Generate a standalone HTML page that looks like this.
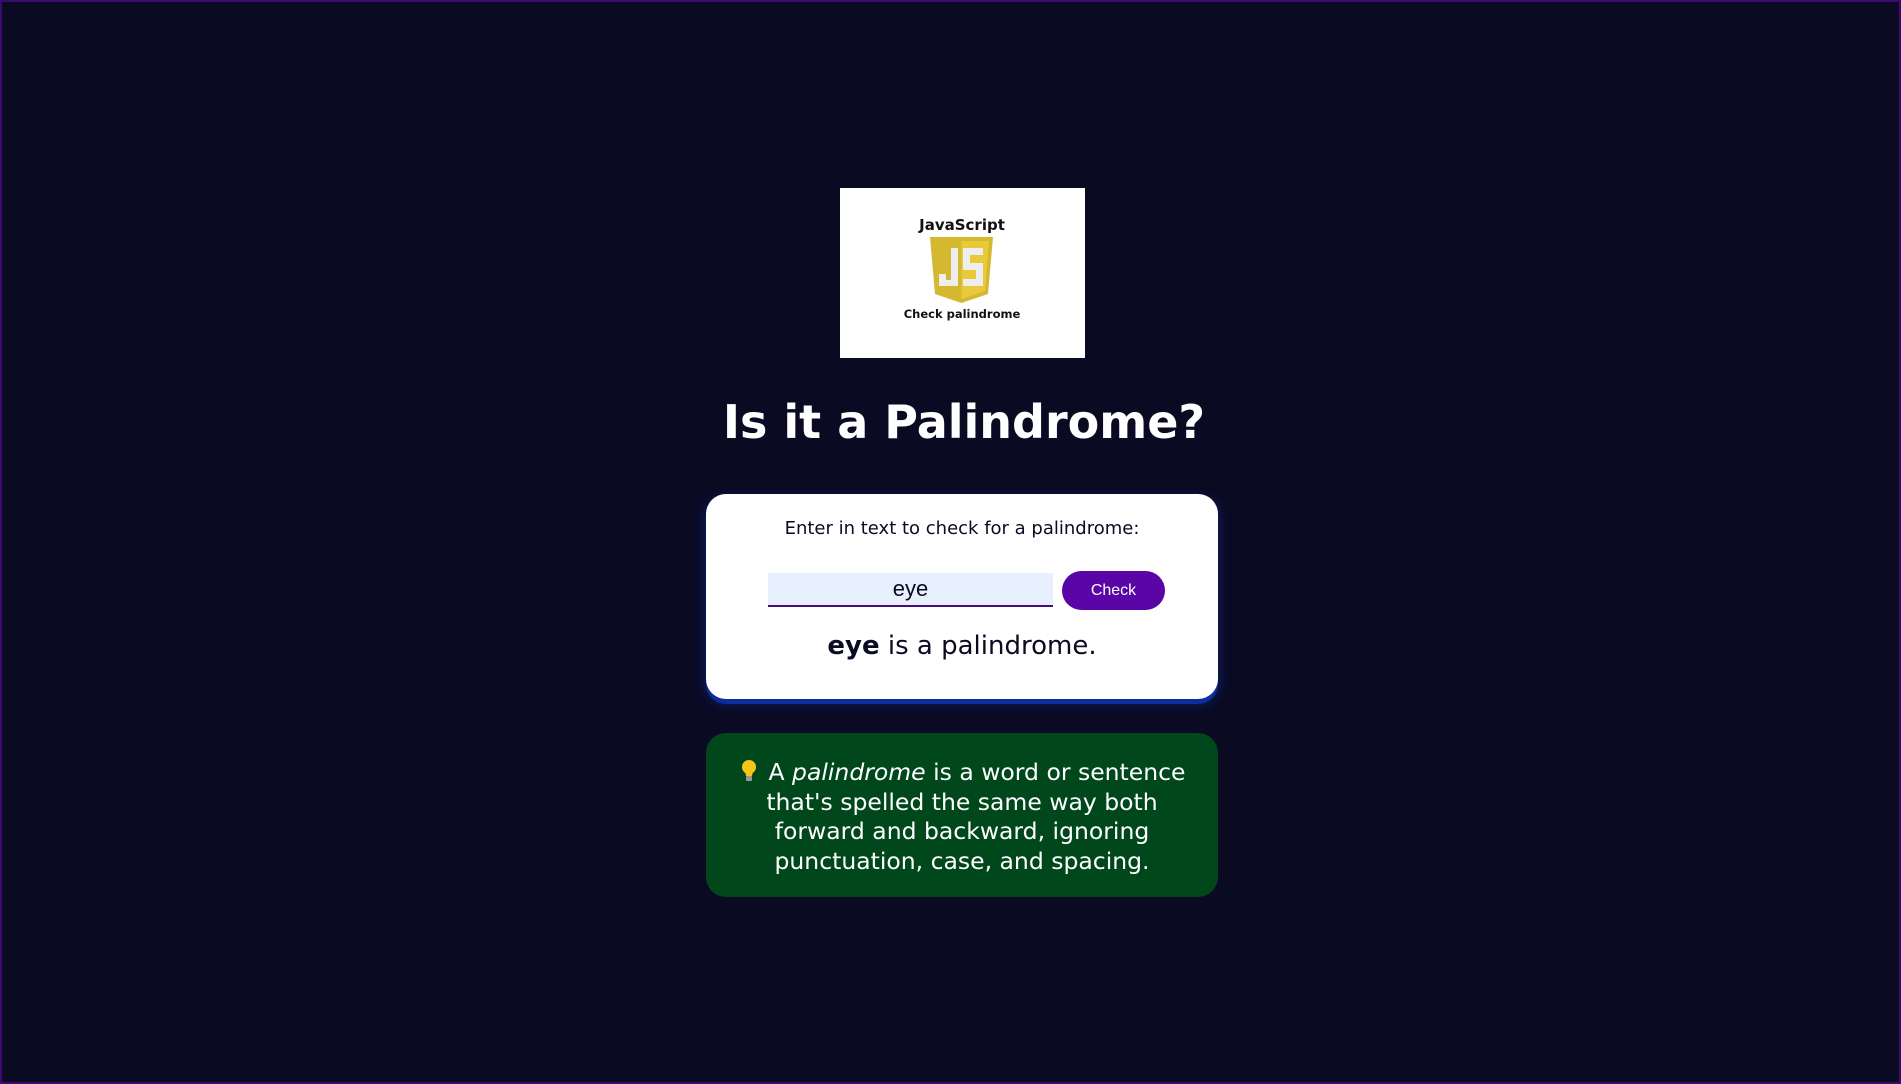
<!DOCTYPE html>
<html><head><meta charset="utf-8"><style>
html,body{margin:0;padding:0}
body{width:1901px;height:1084px;background:#0a0a23;box-sizing:border-box;border:2px solid #3b0a6e;position:relative;overflow:hidden;font-family:"DejaVu Sans","Liberation Sans",sans-serif}
.logo{position:absolute;left:838px;top:186px;width:245px;height:170px;background:#fff}
h1{position:absolute;left:662px;width:600px;top:390px;margin:0;text-align:center;color:#fff;font-size:46px;font-weight:bold;line-height:60px}
.card{position:absolute;left:704px;top:492px;width:512px;height:205px;background:#fff;border-radius:20px;box-shadow:0 5px 0 #0b2e9e,0 4px 12px rgba(20,60,200,.5)}
.lbl{position:absolute;left:0;right:0;top:24px;text-align:center;font-size:18px;color:#0a0a23}
.inp{position:absolute;left:62px;top:79px;width:285px;height:32px;background:#e8f0fe;border-bottom:2px solid #4a0a7a;text-align:center;font-family:"Liberation Sans",sans-serif;font-size:22px;line-height:32px;color:#0a0a23}
.btn{position:absolute;left:356px;top:77px;width:103px;height:39px;background:#5a05a5;border-radius:20px;color:#fff;font-family:"Liberation Sans",sans-serif;font-size:16px;line-height:39px;text-align:center}
.res{position:absolute;left:0;right:0;top:137px;text-align:center;font-size:26px;color:#0a0a23}
.tip{position:absolute;left:704px;top:731px;width:512px;height:164px;background:#00471b;border-radius:20px;color:#fff;font-size:23.5px;line-height:29.5px;text-align:center;box-sizing:border-box;padding:25px 18px 0}
</style></head><body>
<div class="logo">
<svg width="245" height="170" viewBox="0 0 245 170">
<text x="122" y="42" text-anchor="middle" font-family="DejaVu Sans" font-weight="bold" font-size="15" fill="#111">JavaScript</text>
<path d="M90 49 L153 49 L148 106 L121.5 115 L95 106 Z" fill="#d4b830"/>
<path d="M121.5 53 L149 53 L145 103 L121.5 111 Z" fill="#e8c93a"/>
<path d="M111 60 L118 60 L118 98 L99 98 L99 86 L106 86 L106 92 L111 92 Z" fill="#eee"/>
<path d="M123 60 L143 60 L143 67 L130 67 L130 75 L143 75 L143 98 L123 98 L123 91 L136 91 L136 82 L123 82 Z" fill="#eee"/>
<text x="122" y="130" text-anchor="middle" font-family="DejaVu Sans" font-weight="bold" font-size="11.5" fill="#111">Check palindrome</text>
</svg></div>
<h1>Is it a Palindrome?</h1>
<div class="card">
<div class="lbl">Enter in text to check for a palindrome:</div>
<div class="inp">eye</div>
<div class="btn">Check</div>
<div class="res"><b>eye</b> is a palindrome.</div>
</div>
<div class="tip"><svg width="20" height="24" viewBox="0 0 20 24" style="vertical-align:-3px;margin-right:10px"><circle cx="10" cy="8" r="7" fill="#f5c518"/><path d="M6 12 L14 12 L13 17 L7 17 Z" fill="#f5c518"/><rect x="7" y="17" width="6" height="5" rx="1" fill="#999"/></svg>A <i>palindrome</i> is a word or sentence that's spelled the same way both forward and backward, ignoring punctuation, case, and spacing.</div>
</body></html>
